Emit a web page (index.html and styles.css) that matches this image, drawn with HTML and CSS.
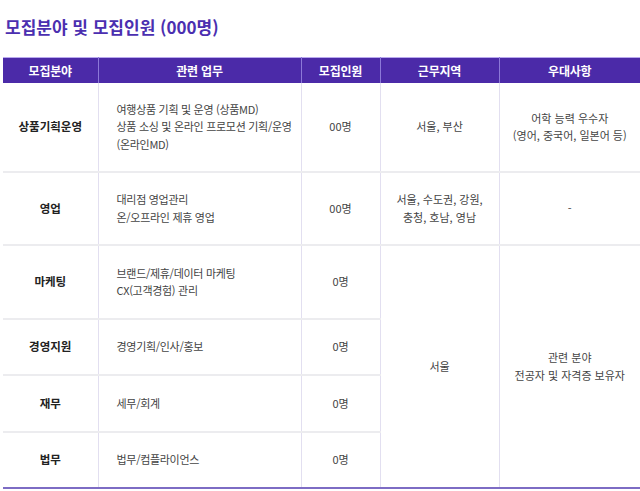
FILE: index.html
```html
<!DOCTYPE html>
<html lang="ko">
<head>
<meta charset="utf-8">
<link rel="stylesheet" href="styles.css">
</head>
<body>
<div class="page">
  <h2 class="title">모집분야 및 모집인원 (000명)</h2>
  <table class="recruit">
    <colgroup>
      <col class="c1"><col class="c2"><col class="c3"><col class="c4"><col class="c5">
    </colgroup>
    <thead>
      <tr>
        <th>모집분야</th>
        <th>관련 업무</th>
        <th>모집인원</th>
        <th>근무지역</th>
        <th>우대사항</th>
      </tr>
    </thead>
    <tbody>
      <tr class="r1">
        <td class="field">상품기획운영</td>
        <td class="task">여행상품 기획 및 운영 (상품MD)<br>상품 소싱 및 온라인 프로모션 기획/운영<br>(온라인MD)</td>
        <td>00명</td>
        <td>서울, 부산</td>
        <td>어학 능력 우수자<br>(영어, 중국어, 일본어 등)</td>
      </tr>
      <tr class="r2">
        <td class="field">영업</td>
        <td class="task">대리점 영업관리<br>온/오프라인 제휴 영업</td>
        <td>00명</td>
        <td>서울, 수도권, 강원,<br>충청, 호남, 영남</td>
        <td>-</td>
      </tr>
      <tr class="r3">
        <td class="field">마케팅</td>
        <td class="task">브랜드/제휴/데이터 마케팅<br>CX(고객경험) 관리</td>
        <td>0명</td>
        <td rowspan="4">서울</td>
        <td rowspan="4">관련 분야<br>전공자 및 자격증 보유자</td>
      </tr>
      <tr class="r4">
        <td class="field">경영지원</td>
        <td class="task">경영기획/인사/홍보</td>
        <td>0명</td>
      </tr>
      <tr class="r5">
        <td class="field">재무</td>
        <td class="task">세무/회계</td>
        <td>0명</td>
      </tr>
      <tr class="r6">
        <td class="field">법무</td>
        <td class="task">법무/컴플라이언스</td>
        <td>0명</td>
      </tr>
    </tbody>
  </table>
</div>
</body>
</html>
```

FILE: styles.css
```css
html, body {
  margin: 0;
  padding: 0;
  background: #ffffff;
}
body {
  font-family: "Noto Sans CJK KR", "Noto Sans", sans-serif;
  color: #333333;
}
.page {
  padding: 16px 0 0 3px;
}
.title {
  margin: 0 0 0 2px;
  font-size: 17px;
  line-height: 22px;
  font-weight: 700;
  color: #4b2fb0;
  letter-spacing: 0;
}
.recruit {
  margin-top: 19px;
  width: 637px;
  border-collapse: collapse;
  table-layout: fixed;
  font-size: 11px;
}
.c1 { width: 95px; }
.c2 { width: 203px; }
.c3 { width: 79px; }
.c4 { width: 119px; }
.c5 { width: 141px; }
.recruit th {
  height: 25px;
  padding: 0;
  background: #4b2aa8;
  color: #ffffff;
  font-size: 12px;
  font-weight: 700;
  text-align: center;
  border-top: 1px solid #b9a9ee;
  border-left: 1px solid #8c78d8;
  border-right: 1px solid #8c78d8;
  letter-spacing: -0.2px;
}
.recruit th:first-child { border-left: none; }
.recruit th:last-child { border-right: none; }
.recruit td {
  padding: 0 6px;
  text-align: center;
  vertical-align: middle;
  line-height: 17.5px;
  color: #444444;
  border-left: 1px solid #e2dff0;
  border-right: 1px solid #e2dff0;
  border-bottom: 2px solid #ececef;
  white-space: nowrap;
}
.recruit td:first-child { border-left: none; }
.recruit tr td:last-child { border-right: none; }
.recruit td.field {
  font-weight: 700;
  color: #222222;
  font-size: 11.5px;
}
.recruit td.task {
  text-align: left;
  padding-left: 18px;
  padding-right: 0;
  letter-spacing: -0.3px;
}
.r1 td { height: 88px; }
.r2 td { height: 71px; }
.r3 td { height: 72px; }
.r4 td { height: 54px; }
.r5 td { height: 55px; }
.r6 td { height: 54px; }
.recruit tr.r6 td,
.recruit td[rowspan] {
  border-bottom: 2px solid #7d6cc4;
}
```
